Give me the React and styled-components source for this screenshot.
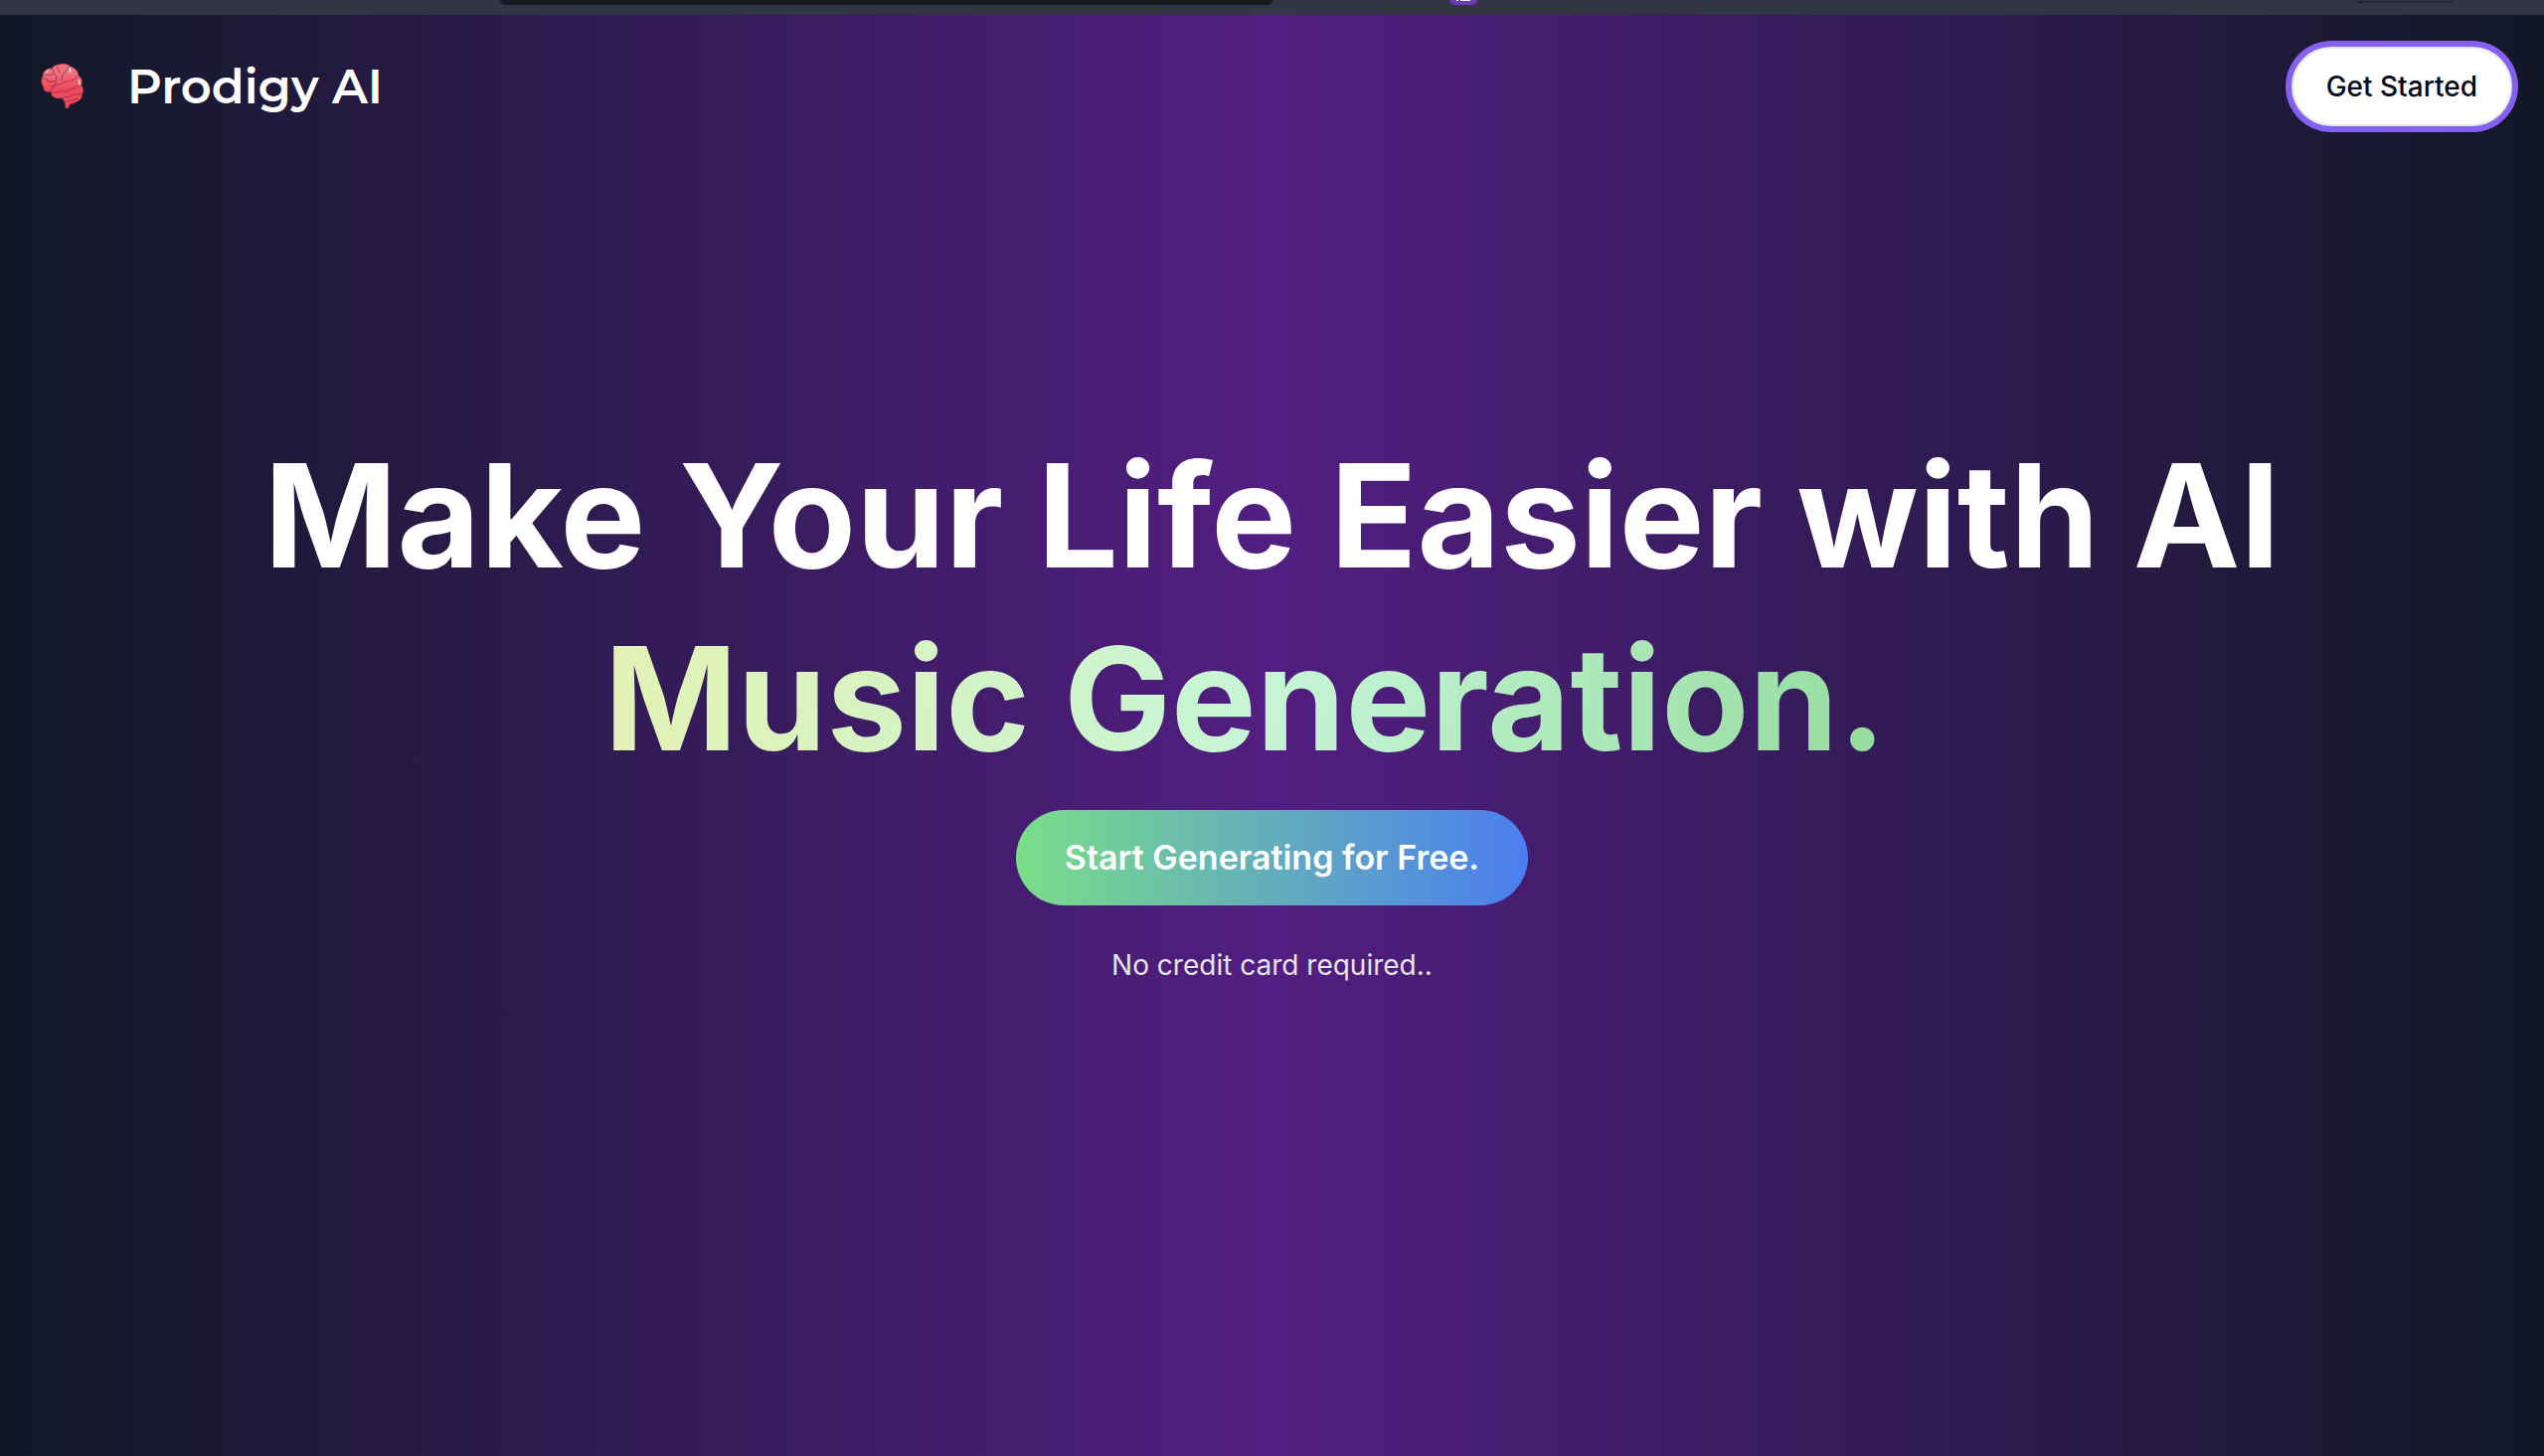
import React from "react";
import styled, { createGlobalStyle } from "styled-components";

const GlobalStyle = createGlobalStyle`
  *, *::before, *::after { box-sizing: border-box; }
  body {
    margin: 0;
    background: #111827;
    font-family: Inter, "Liberation Sans", sans-serif;
    -webkit-font-smoothing: antialiased;
  }
  a { color: inherit; text-decoration: none; }
  button { font-family: inherit; cursor: pointer; }
`;

const Page = styled.div`
  display: flex;
  flex-direction: column;
  min-height: 100vh;
`;

const BrowserBar = styled.div`
  display: grid;
  grid-template-columns: 503fr 777fr 178fr 28fr 884fr 98fr 91fr;
  align-items: start;
  height: 15px;
  overflow: hidden;
  background: #323543;
`;

const AddressField = styled.div`
  grid-column: 2;
  height: 5px;
  border-radius: 0 0 8px 8px;
  background: #191a1f;
`;

const ExtensionBadge = styled.div`
  grid-column: 4;
  display: flex;
  align-items: flex-start;
  justify-content: center;
  height: 5px;
  overflow: hidden;
  border-radius: 0 0 5px 5px;
  background: #673ab7;
`;

const BarPill = styled.div`
  grid-column: 6;
  height: 3px;
  border-bottom: 2px solid #24262f;
  border-radius: 0 0 8px 8px;
`;

const Landing = styled.div`
  flex: 1;
  display: flex;
  flex-direction: column;
  background: linear-gradient(to right, #111827, #521e82, #111827);
`;

const Header = styled.header`
  display: flex;
  align-items: center;
  justify-content: space-between;
  padding: 32px;
`;

const Brand = styled.a`
  display: flex;
  align-items: center;
  gap: 32px;
`;

const BrandName = styled.h1`
  margin: 0;
  color: #fff;
  font-family: Montserrat, Inter, sans-serif;
  font-size: 48px;
  line-height: 64px;
  font-weight: 600;
`;

const GetStarted = styled.button`
  height: 80px;
  padding: 0 33px;
  border: 2px solid #e2e8f0;
  border-radius: 40px;
  background: #fff;
  box-shadow: 0 0 0 6px #8560f0;
  color: #020817;
  font-size: 28px;
  line-height: 40px;
  font-weight: 500;
`;

const Hero = styled.main`
  display: flex;
  flex-direction: column;
  align-items: center;
  padding: 288px 32px;
  text-align: center;
`;

const Headline = styled.h2`
  display: flex;
  flex-direction: column;
  gap: 40px;
  margin: 0;
  color: #fff;
  font-size: 144px;
  line-height: 144px;
  font-weight: 700;
`;

const Typed = styled.span`
  padding-right: 54px;
  background: linear-gradient(100deg, #f3f0a3, #c6f5d6 50%, #76cb7c);
  background-clip: text;
  -webkit-background-clip: text;
  color: transparent;
`;

const StartButton = styled.button`
  height: 96px;
  margin-top: 40px;
  padding: 0 49px;
  border: 0;
  border-radius: 48px;
  background: linear-gradient(to right, #7ade88, #4b7df0);
  color: #fff;
  font-size: 34px;
  line-height: 56px;
  font-weight: 600;
`;

const Note = styled.p`
  margin: 40px 0 0;
  color: #e4e4e7;
  font-size: 28px;
  line-height: 40px;
`;

const BrainIcon = () => (
  <svg width="64" height="64" viewBox="0 0 64 64" aria-hidden="true">
    <defs>
      <linearGradient id="brain" x1="0" y1="0" x2="0" y2="1">
        <stop offset="0.2" stopColor="#f27080" />
        <stop offset="0.55" stopColor="#f04a5e" />
      </linearGradient>
    </defs>
    <path
      d="M12 33C9 29 9 25 11 22C11 17 15 13 20 14C22 10 27 10 29 9.500C34 8 38 11 39 12C45 14 47 18 47 21C51 24 51 27 50 31C52.500 35 52 38 50.500 40C51 44 48 46 45 47.500C42 49.500 40 49 38 50L37 53.500L34 54L33 48L30.500 43.500C24 45 20 43 19 37.500C14 38 11 36 12 33Z"
      fill="url(#brain)"
      stroke="#85303f"
      strokeWidth="0.700"
    />
    <path
      d="M11 25C14 23 16 24 16 27M13 20C17 20 19 22 22 19C23 17 22 15 20 14M16 27C19 28 22 26 24 27C25 30 22 32 19 32M25 12C25 15 28 15 28 18M22 19C25 20 25 23 24 27M38 12C35 14 35 17 32 19C30 21 31 24 30 26M47 21C43 24 41 27 37 27C33 26 31 30 26 30C22 31 20 34 19 37.500M19 37.500C24 40 27 36 32 37C36 38 38 34 41 34C45 34 46 30 50 31M30.500 43.500C34 42 38 43 41 41C44 38 47 41 50.500 39M33 48C37 45 41 47 46 44"
      fill="none"
      stroke="#85303f"
      strokeWidth="0.800"
      strokeLinecap="round"
    />
    <path d="M38.500 13.500V17M47.500 26L48 30" stroke="#fff" strokeWidth="1.400" strokeLinecap="round" />
    <path d="M14.500 18L16.500 16" stroke="#f9c3ca" strokeWidth="1.200" strokeLinecap="round" />
  </svg>
);

const BadgeGlyph = () => (
  <svg width="14" height="1" viewBox="0 0 14 1" aria-hidden="true">
    <path d="M0 0H2V1H0ZM4 0H14V1H4Z" fill="#fff" />
  </svg>
);

export default function App() {
  return (
    <Page>
      <GlobalStyle />
      <BrowserBar>
        <AddressField />
        <ExtensionBadge>
          <BadgeGlyph />
        </ExtensionBadge>
        <BarPill />
      </BrowserBar>
      <Landing>
        <Header>
          <Brand href="#">
            <BrainIcon />
            <BrandName>Prodigy AI</BrandName>
          </Brand>
          <GetStarted type="button">Get Started</GetStarted>
        </Header>
        <Hero>
          <Headline>
            <span>Make Your Life Easier with AI</span>
            <Typed>Music Generation.</Typed>
          </Headline>
          <StartButton type="button">Start Generating for Free.</StartButton>
          <Note>No credit card required..</Note>
        </Hero>
      </Landing>
    </Page>
  );
}
